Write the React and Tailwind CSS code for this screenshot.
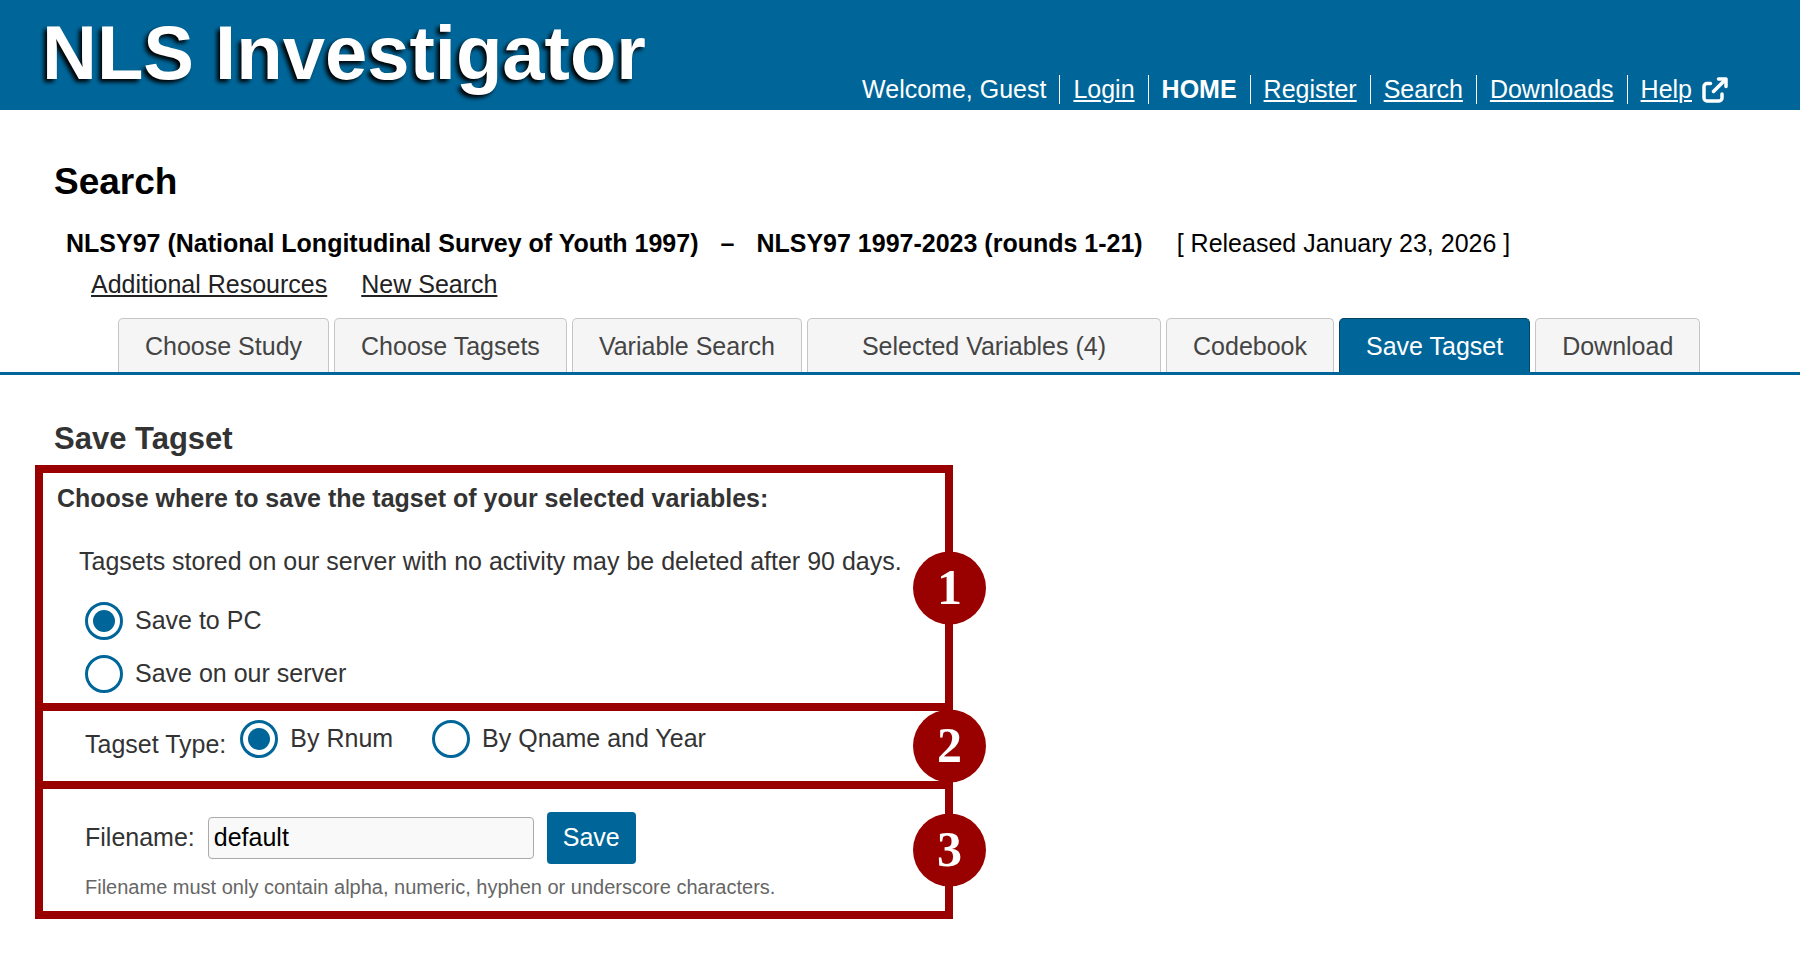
import { useState } from 'react'

const navLinks = [
  { label: 'Login' },
  { label: 'HOME', current: true },
  { label: 'Register' },
  { label: 'Search' },
  { label: 'Downloads' },
  { label: 'Help', external: true },
]

const tabs = [
  { label: 'Choose Study' },
  { label: 'Choose Tagsets' },
  { label: 'Variable Search' },
  { label: 'Selected Variables (4)', wide: true },
  { label: 'Codebook' },
  { label: 'Save Tagset', active: true },
  { label: 'Download' },
]

function ExternalIcon() {
  return (
    <svg
      className="w-[26px] h-[26px]"
      viewBox="0 0 26 26"
      fill="none"
      stroke="currentColor"
      strokeWidth="3.5"
      strokeLinecap="round"
      strokeLinejoin="round"
      aria-hidden="true"
    >
      <path d="M8.5 6.5H5A3 3 0 0 0 2 9.5V21a3 3 0 0 0 3 3h12a3 3 0 0 0 3-3v-4" />
      <path d="M11.5 14.5L23 3" />
      <path d="M16.500 2H24v7.500" />
    </svg>
  )
}

function Header() {
  return (
    <header className="bg-[#006699] text-white flex justify-between items-end h-[110px] pl-[42px] pr-[72px]">
      <div className="self-start pt-[9px] text-[76px] leading-[88px] font-bold [text-shadow:-3px_3px_4px_#000]">
        NLS Investigator
      </div>
      <nav className="flex items-center pb-[6px] leading-[29px]">
        <span className="pr-[13px]">Welcome, Guest</span>
        {navLinks.map((link) => (
          <span
            key={link.label}
            className={`flex items-center gap-[10px] border-l border-white pl-[13px] ${link.external ? '' : 'pr-[13px]'}`}
          >
            <a href="#" className={link.current ? 'font-bold' : 'underline underline-offset-2 decoration-2'}>
              {link.label}
            </a>
            {link.external && <ExternalIcon />}
          </span>
        ))}
      </nav>
    </header>
  )
}

function Tabs() {
  return (
    <nav className="flex gap-[5px] pl-[118px] mt-[19px] border-b-[3px] border-[#006699]">
      {tabs.map((tab) => (
        <a
          key={tab.label}
          href="#"
          className={`h-[54px] leading-[54px] border border-b-0 rounded-t-[5px] whitespace-nowrap ${
            tab.wide ? 'px-[54px]' : 'px-[26px]'
          } ${tab.active ? 'bg-[#006699] border-[#004466] text-white' : 'bg-[#f5f5f5] border-[#c5c5c5] text-[#444]'}`}
        >
          {tab.label}
        </a>
      ))}
    </nav>
  )
}

function Radio({ name, label, checked, onChange }) {
  return (
    <label className="flex items-center gap-[12px]">
      <input
        type="radio"
        name={name}
        checked={checked}
        onChange={onChange}
        className="appearance-none w-[38px] h-[38px] rounded-full border-[3px] border-[#006699] bg-white grid place-items-center before:w-[22px] before:h-[22px] before:rounded-full checked:before:bg-[#006699]"
      />
      <span className="pb-[2px]">{label}</span>
    </label>
  )
}

// Numbered step, the badge sits on the right border
function Step({ number, className, children }) {
  return (
    <section className={`relative ${className}`}>
      {children}
      <div className="absolute top-1/2 -right-[41px] -translate-y-1/2 w-[73px] h-[73px] pb-[4px] rounded-full bg-[#990000] text-white flex items-center justify-center font-['Liberation_Serif',serif] font-bold text-[50px] leading-[50px]">
        {number}
      </div>
    </section>
  )
}

export default function App() {
  const [target, setTarget] = useState('pc')
  const [type, setType] = useState('rnum')
  const [filename, setFilename] = useState('default')

  return (
    <div className="bg-white text-black text-[25px] leading-[30px] font-['Liberation_Sans',Arial,sans-serif]">
      <Header />

      <h1 className="pl-[54px] pt-[50px] text-[37px] leading-[44px] font-bold">Search</h1>
      <div className="flex gap-[34px] pl-[66px] mt-[24px]">
        <h2 className="flex gap-[22px] font-bold">
          <span>NLSY97 (National Longitudinal Survey of Youth 1997)</span>
          <span>–</span>
          <span>NLSY97 1997-2023 (rounds 1-21)</span>
        </h2>
        <span>[ Released January 23, 2026 ]</span>
      </div>
      <div className="flex gap-[34px] pl-[91px] mt-[11px] text-[#222]">
        <a href="#" className="underline underline-offset-2 decoration-2">Additional Resources</a>
        <a href="#" className="underline underline-offset-2 decoration-2">New Search</a>
      </div>

      <Tabs />

      <main className="pl-[35px] pt-[45px] text-[#333]">
        <h2 className="pl-[19px] text-[31px] leading-[38px] font-bold">Save Tagset</h2>

        <form
          className="mt-[7px] w-full max-w-[918px] border-8 border-[#990000] divide-y-8 divide-[#990000]"
          onSubmit={(e) => e.preventDefault()}
        >
          <Step number={1} className="pl-[14px] pt-[10px] pb-[10px]">
            <h3 className="font-bold">Choose where to save the tagset of your selected variables:</h3>
            <p className="pl-[22px] mt-[33px]">
              Tagsets stored on our server with no activity may be deleted after 90 days.
            </p>
            <div className="flex flex-col items-start gap-[15px] pl-[28px] mt-[26px]">
              <Radio name="target" label="Save to PC" checked={target === 'pc'} onChange={() => setTarget('pc')} />
              <Radio
                name="target"
                label="Save on our server"
                checked={target === 'server'}
                onChange={() => setTarget('server')}
              />
            </div>
          </Step>

          <Step number={2} className="flex items-start h-[78px] pl-[42px] pt-[9px]">
            <span className="pt-[9px] mr-[14px]">Tagset Type:</span>
            <div className="flex gap-[39px]">
              <Radio name="type" label="By Rnum" checked={type === 'rnum'} onChange={() => setType('rnum')} />
              <Radio
                name="type"
                label="By Qname and Year"
                checked={type === 'qname'}
                onChange={() => setType('qname')}
              />
            </div>
          </Step>

          <Step number={3} className="pl-[42px] pt-[23px] pb-[11px]">
            <div className="flex items-center">
              <label htmlFor="filename" className="mr-[13px] pb-[2px]">Filename:</label>
              <input
                id="filename"
                type="text"
                value={filename}
                onChange={(e) => setFilename(e.target.value)}
                className="w-[326px] h-[42px] px-[5px] pb-[2px] border border-[#aaa] rounded-[4px] bg-[#f9f9f9] text-black"
              />
              <button type="submit" className="ml-[13px] h-[52px] px-[16px] pb-[2px] rounded-[4px] bg-[#006699] text-white">
                Save
              </button>
            </div>
            <p className="mt-[11px] text-[20px] leading-[25px] text-[#666]">
              Filename must only contain alpha, numeric, hyphen or underscore characters.
            </p>
          </Step>
        </form>
      </main>
    </div>
  )
}
